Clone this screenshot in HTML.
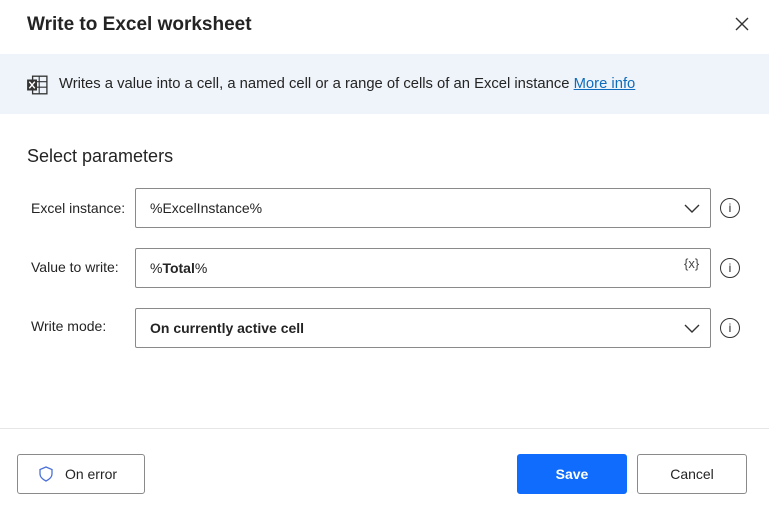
<!DOCTYPE html>
<html><head><style>
*{box-sizing:border-box;margin:0;padding:0}
body{width:769px;height:516px;background:#fff;font-family:"Liberation Sans",sans-serif;color:#242424;position:relative;overflow:hidden}
.a{position:absolute}
.title{left:27px;top:14px;font-size:19px;font-weight:bold}
.banner{left:0;top:54px;width:769px;height:60px;background:#eff4fa}
.btext{left:59px;top:76px;font-size:14.8px}
.btext a{color:#0f6cbd;text-decoration:underline}
.sub{left:27px;top:146px;font-size:18px}
.lbl{left:31px;font-size:14px}
.box{left:135px;width:576px;height:40px;border:1px solid #8a8a8a;border-radius:2px;font-size:14px;padding-left:14px;line-height:38px}
.info{left:720px;width:20px;height:20px;border:1.3px solid #333;border-radius:50%;font-size:12px;text-align:center;line-height:18px}
.sep{left:0;top:428px;width:769px;height:1px;background:#e6e6e6}
.btn{height:40px;border:1px solid #8a8a8a;border-radius:3px;font-size:14px;font-weight:bold;text-align:center;line-height:38px;top:454px}
</style></head><body>
<div class="a title">Write to Excel worksheet</div>
<svg class="a" style="left:735px;top:17px" width="14" height="14" viewBox="0 0 14 14"><path d="M1 1L13 13M13 1L1 13" stroke="#333" stroke-width="1.4"/></svg>
<div class="a banner"></div>
<svg class="a" style="left:26px;top:75px" width="22" height="20" viewBox="0 0 20 18"><rect x="6" y="1" width="13" height="16" fill="none" stroke="#333" stroke-width="1.2"/><path d="M6 6H19M6 11H19M12 1V17" stroke="#333" stroke-width="1"/><rect x="1" y="4" width="9" height="10" fill="#333"/><path d="M3 6L8 12M8 6L3 12" stroke="#fff" stroke-width="1.3"/></svg>
<div class="a btext">Writes a value into a cell, a named cell or a range of cells of an Excel instance <a>More info</a></div>
<div class="a sub">Select parameters</div>
<div class="a lbl" style="top:200px">Excel instance:</div>
<div class="a box" style="top:188px">%ExcelInstance%</div>
<svg class="a" style="left:684px;top:204px" width="16" height="9" viewBox="0 0 16 9"><path d="M1 1L8 8L15 1" fill="none" stroke="#333" stroke-width="1.4"/></svg>
<div class="a info" style="top:198px">i</div>
<div class="a lbl" style="top:259px">Value to write:</div>
<div class="a box" style="top:248px">%<b>Total</b>%</div>
<div class="a" style="left:684px;top:256px;font-size:13px;color:#444">{x}</div>
<div class="a info" style="top:258px">i</div>
<div class="a lbl" style="top:318px">Write mode:</div>
<div class="a box" style="top:308px;font-weight:bold">On currently active cell</div>
<svg class="a" style="left:684px;top:324px" width="16" height="9" viewBox="0 0 16 9"><path d="M1 1L8 8L15 1" fill="none" stroke="#333" stroke-width="1.4"/></svg>
<div class="a info" style="top:318px">i</div>
<div class="a sep"></div>
<div class="a btn" style="left:17px;width:128px;font-weight:normal;padding-left:20px">On error</div>
<svg class="a" style="left:39px;top:466px" width="14" height="16" viewBox="0 0 14 16"><path d="M7 1L13 3.5V8C13 11 10 13.5 7 15C4 13.5 1 11 1 8V3.5Z" fill="none" stroke="#4a6fd8" stroke-width="1.3"/></svg>
<div class="a btn" style="left:517px;width:110px;background:#0f6cfd;border-color:#0f6cfd;color:#fff">Save</div>
<div class="a btn" style="left:637px;width:110px;font-weight:normal">Cancel</div>
</body></html>
